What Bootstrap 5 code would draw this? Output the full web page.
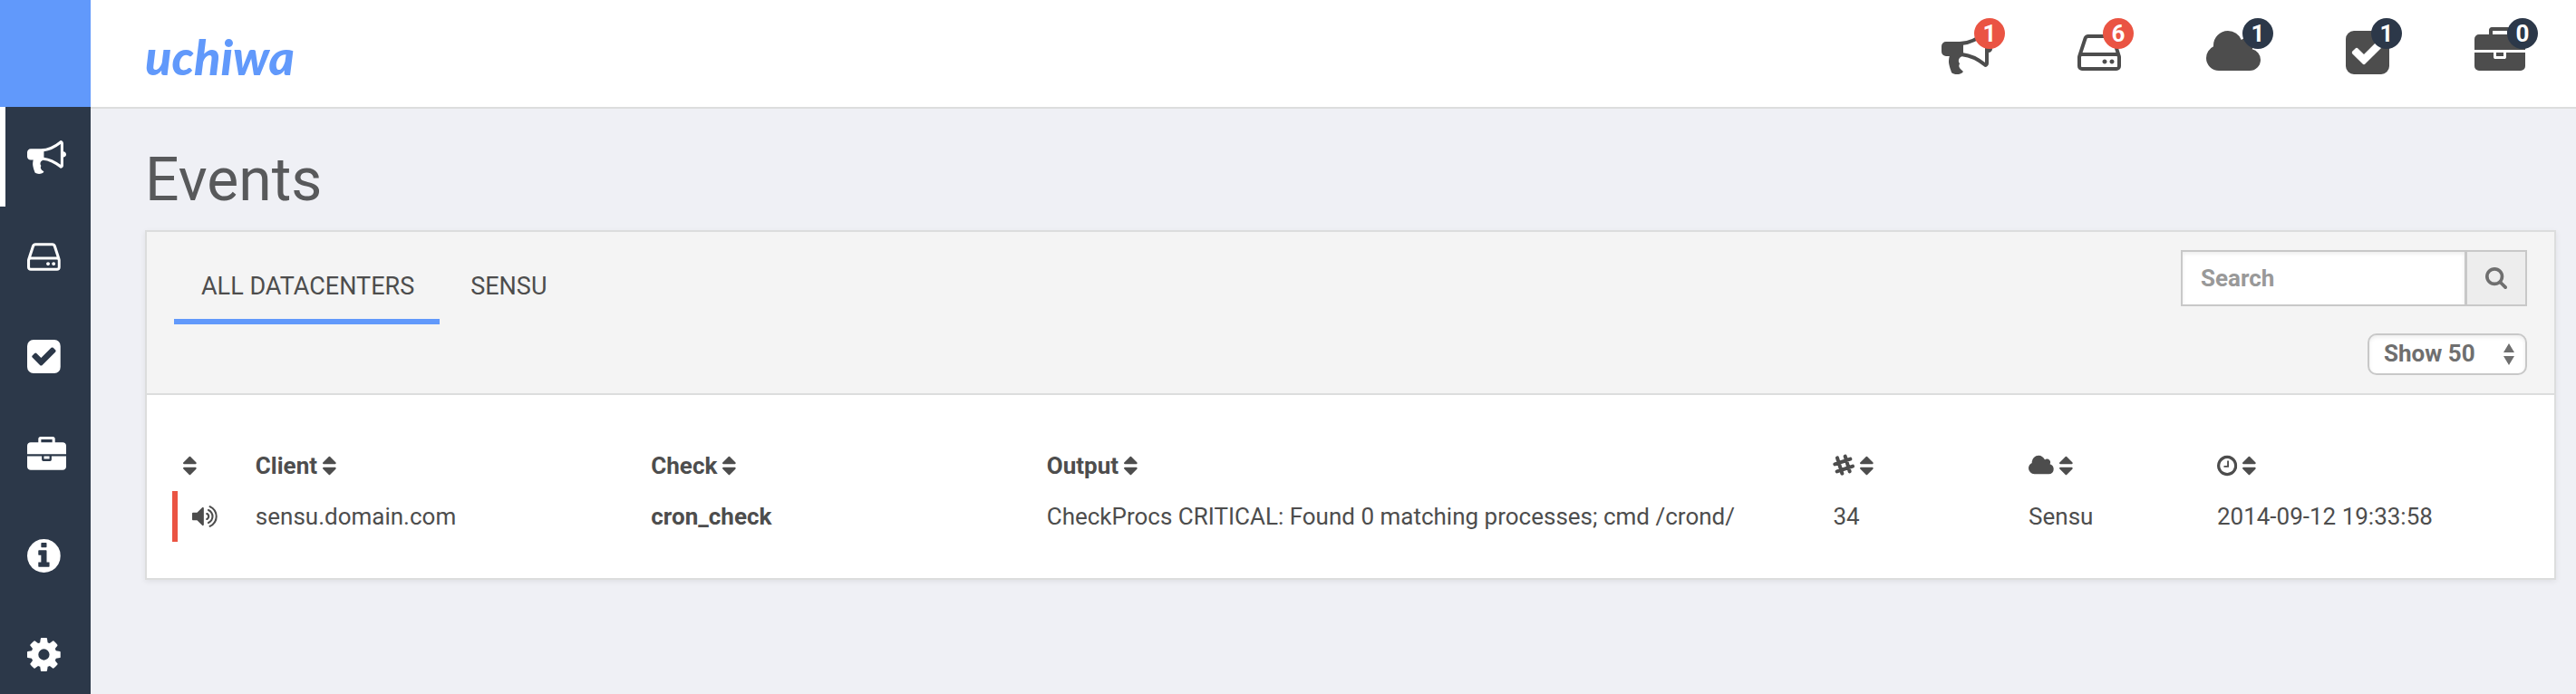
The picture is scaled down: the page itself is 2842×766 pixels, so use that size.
<!DOCTYPE html>
<html lang="en">
<head>
<meta charset="utf-8">
<meta name="viewport" content="width=device-width, initial-scale=1">
<title>Uchiwa - Events</title>
<link rel="stylesheet" href="https://cdn.jsdelivr.net/npm/bootstrap@5.3.0/dist/css/bootstrap.min.css">
<style>
  :root { --ink: #4d4d4d; --accent: #6199fb; --navy: #2c3849; --alert: #ea5443; --line: #dcdddd; }
  body { background: #eff0f5; color: var(--ink); font-family: Roboto, "Liberation Sans", sans-serif; font-size: 26px; line-height: 36px; }
  .glyph { fill: currentColor; height: 56px; width: auto; display: block; flex: none; overflow: visible; }

  .side-nav { width: 100px; background: var(--navy); }
  .side-top { height: 118px; background: var(--accent); }
  .side-link { height: 110px; padding-left: 30px; color: #fff; }
  .side-link:last-child { height: 108px; }
  .side-link.active { box-shadow: inset 6px 0 #fff; }
  .side-link .glyph { height: 43px; }

  .top-bar { height: 120px; padding: 0 56px 2px 60px; background: #fff; border-bottom: 2px solid var(--line); }
  .brand { font: italic 900 54px/64px Lato, sans-serif; color: var(--accent); padding-top: 10px; }
  .counters { gap: 94px; }
  .counter { color: var(--ink); }
  .counter-badge { position: absolute; top: -10px; right: -14px; width: 34px; height: 34px; border-radius: 50%; background: var(--navy); color: #fff; font-weight: 700; font-size: 26px; line-height: 34px; text-align: center; }
  .counter-badge.is-alert { background: var(--alert); }

  .content { padding: 40px 22px 40px 60px; }
  .page-title { font-size: 66px; line-height: 78px; font-weight: 400; color: #58595b; margin: 0 0 16px; }
  .panel { background: #fff; border: 2px solid var(--line); box-shadow: 0 2px 6px rgba(0,0,0,.07); }
  .panel-top { background: #f4f4f4; border-bottom: 2px solid var(--line); padding: 20px 30px; }
  .dc-tabs { gap: 4px; padding-top: 20px; }
  .dc-tab { display: block; color: var(--ink); text-decoration: none; text-transform: uppercase; font-size: 27px; padding: 2px 28px 18px 30px; border-bottom: 6px solid transparent; }
  .dc-tab.active { border-color: var(--accent); }
  .tools { gap: 30px; }
  .search-box { width: 382px; height: 62px; }
  .search-box .form-control, .search-box .btn { border: 2px solid #c8c8c8; border-radius: 0; font-size: 26px; }
  .search-box .form-control { padding: 0 20px; font-weight: 700; line-height: 36px; box-shadow: inset 0 2px 4px rgba(0,0,0,.08); }
  .search-box .form-control::placeholder { color: #999; opacity: 1; }
  .search-box .btn { width: 68px; padding: 0; background: #ededed; color: #6f6f6f; }
  .search-box .glyph { height: 24px; margin: auto; }
  .show-select { width: 176px; height: 46px; border: 2px solid #c8c8c8; border-radius: 10px; padding: 0 16px 2px; font-size: 26px; line-height: 36px; font-weight: 700; color: #6f6f6f; box-shadow: inset 0 2px 4px rgba(0,0,0,.08);
    background: #fff url("data:image/svg+xml,%3Csvg xmlns='http://www.w3.org/2000/svg' viewBox='0 0 12 24'%3E%3Cpath fill='%236f6f6f' d='M6 0l6 10H0zM6 24l6-10H0z'/%3E%3C/svg%3E") no-repeat right 12px center / 12px 24px; }

  .panel-body { padding: 50px 30px 40px 28px; }
  .events { table-layout: fixed; width: 100%; }
  .events th, .events td { height: 56px; padding: 0 10px; white-space: nowrap; vertical-align: middle; }
  .events th { font-weight: 700; }
  .events th:first-child { padding-left: 12px; }
  .events td:first-child { padding-left: 22px; box-shadow: inset 6px 0 var(--alert); }
  .events .glyph { height: 26px; }
  .events .glyph.sound { height: 30px; }
  .sort-btn { border: 0; background: none; padding: 0; font: inherit; color: inherit; display: flex; align-items: center; gap: 6px; }
  .c-state { width: 3.15%; } .c-name { width: 16.8%; } .c-out { width: 33.4%; } .c-count { width: 8.3%; } .c-dc { width: 8%; }
</style>
</head>
<body>
<svg class="d-none" aria-hidden="true">
  <symbol id="bullhorn" viewBox="0 0 1792 1792"><path d="M1664 640q53 0 90.500 37.500t37.500 90.500-37.500 90.500-90.500 37.500v384q0 52-38 90t-90 38q-417-347-812-380-58 19-91 66t-31 100.500 40 92.500q-20 33-23 65.500t6 58 33.500 55 48 50 61.500 50.500q-29 58-111.500 83t-168.500 11.500-132-55.500q-7-23-29.500-87.500t-32-94.500-23-89-15-101 3.500-98.500 22-110.500h-122q-66 0-113-47t-47-113v-192q0-66 47-113t113-47h480q435 0 896-384 52 0 90 38t38 90v384zm-128 604v-954q-394 302-768 343v270q377 42 768 341z"/></symbol>
  <symbol id="hdd" viewBox="128 0 1536 1792"><path d="M1168 1216q0 33-23.500 56.500t-56.500 23.500-56.500-23.500-23.500-56.500 23.500-56.500 56.500-23.500 56.500 23.500 23.500 56.500zm256 0q0 33-23.500 56.500t-56.500 23.500-56.500-23.500-23.500-56.500 23.500-56.500 56.500-23.500 56.500 23.500 23.500 56.500zm112 160v-320q0-13-9.500-22.500t-22.500-9.500h-1216q-13 0-22.500 9.500t-9.500 22.500v320q0 13 9.500 22.500t22.500 9.500h1216q13 0 22.500-9.500t9.500-22.500zm-1230-480h1180l-157-482q-4-13-16-21.500t-26-8.500h-782q-14 0-26 8.500t-16 21.500zm1358 160v320q0 66-47 113t-113 47h-1216q-66 0-113-47t-47-113v-320q0-25 16-75l197-606q17-53 63-86t101-33h782q55 0 101 33t63 86l197 606q16 50 16 75z"/></symbol>
  <symbol id="check" viewBox="128 0 1536 1792"><path d="M813 1299l614-614q19-19 19-45t-19-45l-102-102q-19-19-45-19t-45 19l-467 467-211-211q-19-19-45-19t-45 19l-102 102q-19 19-19 45t19 45l358 358q19 19 45 19t45-19zm851-883v960q0 119-84.500 203.500t-203.500 84.500h-960q-119 0-203.500-84.500t-84.500-203.500v-960q0-119 84.500-203.500t203.500-84.500h960q119 0 203.500 84.500t84.500 203.500z"/></symbol>
  <symbol id="briefcase" viewBox="0 0 1792 1792"><path d="M640 256h512v-128h-512v128zm1152 640v480q0 66-47 113t-113 47h-1472q-66 0-113-47t-47-113v-480h672v160q0 26 19 45t45 19h320q26 0 45-19t19-45v-160h672zm-768 0v128h-256v-128h256zm768-480v384h-1792v-384q0-66 47-113t113-47h352v-160q0-40 28-68t68-28h576q40 0 68 28t28 68v160h352q66 0 113 47t47 113z"/></symbol>
  <symbol id="info" viewBox="128 0 1536 1792"><path d="M1152 1376v-160q0-14-9-23t-23-9h-96v-512q0-14-9-23t-23-9h-320q-14 0-23 9t-9 23v160q0 14 9 23t23 9h96v320h-96q-14 0-23 9t-9 23v160q0 14 9 23t23 9h448q14 0 23-9t9-23zm-128-896v-160q0-14-9-23t-23-9h-192q-14 0-23 9t-9 23v160q0 14 9 23t23 9h192q14 0 23-9t9-23zm640 416q0 209-103 385.500t-279.500 279.500-385.500 103-385.500-103-279.500-279.500-103-385.500 103-385.500 279.500-279.500 385.500-103 385.500 103 279.500 279.500 103 385.500z"/></symbol>
  <symbol id="cog" viewBox="128 0 1536 1792"><path d="M1152 896q0-106-75-181t-181-75-181 75-75 181 75 181 181 75 181-75 75-181zm512-109v222q0 12-8 23t-20 13l-185 28q-19 54-39 91 35 50 107 138 10 12 10 25t-9 23q-27 37-99 108t-94 71q-12 0-26-9l-138-108q-44 23-91 38-16 136-29 186-7 28-36 28h-222q-14 0-24.500-8.500t-11.500-21.500l-28-184q-49-16-90-37l-141 107q-10 9-25 9-14 0-25-11-126-114-165-168-7-10-7-23 0-12 8-23 15-21 51-66.500t54-70.500q-27-50-41-99l-183-27q-13-2-21-12.500t-8-23.500v-222q0-12 8-23t19-13l186-28q14-46 39-92-40-57-107-138-10-12-10-24 0-10 9-23 26-36 98.500-107.500t94.500-71.500q13 0 26 10l138 107q44-23 91-38 16-136 29-186 7-28 36-28h222q14 0 24.500 8.500t11.500 21.500l28 184q49 16 90 37l142-107q9-9 24-9 13 0 25 10 129 119 165 170 7 8 7 22 0 12-8 23-15 21-51 66.500t-54 70.500q26 50 41 98l183 28q13 2 21 12.500t8 23.500z"/></symbol>
  <symbol id="cloud" viewBox="64 0 1920 1792"><path d="M1984 1152q0 159-112.500 271.500t-271.500 112.500h-1088q-185 0-316.500-131.500t-131.500-316.500q0-132 71-241.500t187-163.500q-2-28-2-43 0-212 150-362t362-150q158 0 286.500 88t187.500 230q70-62 166-62 106 0 181 75t75 181q0 75-41 138 129 30 213 134.500t84 239.500z"/></symbol>
  <symbol id="sort" viewBox="384 0 1024 1792"><path d="M1408 1088q0 26-19 45l-448 448q-19 19-45 19t-45-19l-448-448q-19-19-19-45t19-45 45-19h896q26 0 45 19t19 45zm0-384q0 26-19 45t-45 19h-896q-26 0-45-19t-19-45 19-45l448-448q19-19 45-19t45 19l448 448q19 19 19 45z"/></symbol>
  <symbol id="search" viewBox="64 128 1664 1664"><path d="M1216 832q0-185-131.500-316.500t-316.500-131.500-316.500 131.500-131.500 316.500 131.500 316.500 316.500 131.500 316.500-131.500 131.500-316.500zm512 832q0 52-38 90t-90 38q-54 0-90-38l-343-342q-179 124-399 124-143 0-273.500-55.500t-225-150-150-225-55.500-273.500 55.500-273.500 150-225 225-150 273.500-55.500 273.500 55.500 225 150 150 225 55.500 273.500q0 220-124 399l343 343q37 37 37 90z"/></symbol>
  <symbol id="sound" viewBox="64 0 1664 1792"><path d="M832 352v1088q0 26-19 45t-45 19-45-19l-333-333h-262q-26 0-45-19t-19-45v-384q0-26 19-45t45-19h262l333-333q19-19 45-19t45 19 19 45zm384 544q0 76-42.500 141.500t-112.500 93.500q-10 5-25 5-26 0-45-18.500t-19-45.500q0-21 12-35.500t29-25 34-23 29-36 12-56.500-12-56.500-29-36-34-23-29-25-12-35.500q0-27 19-45.500t45-18.500q15 0 25 5 70 27 112.500 93t42.500 142zm256 0q0 153-85 282.500t-225 188.500q-13 5-25 5-27 0-46-19t-19-45q0-39 39-59 56-29 76-44 74-54 115.500-135.500t41.500-173.500-41.500-173.500-115.500-135.500q-20-15-76-44-39-20-39-59 0-26 19-45t45-19q13 0 26 5 140 59 225 188.500t85 282.500zm256 0q0 230-127 422.500t-338 283.500q-13 5-26 5-26 0-45-19t-19-45q0-36 39-59 7-4 22.500-10.500t22.500-10.500q46-25 82-51 123-91 192-227t69-289-69-289-192-227q-36-26-82-51-7-4-22.500-10.500t-22.500-10.500q-39-23-39-59 0-26 19-45t45-19q13 0 26 5 211 91 338 283.500t127 422.500z"/></symbol>
  <symbol id="clock" viewBox="128 0 1536 1792"><path d="M1024 544v448q0 14-9 23t-23 9h-320q-14 0-23-9t-9-23v-64q0-14 9-23t23-9h224v-352q0-14 9-23t23-9h64q14 0 23 9t9 23zm416 352q0-148-73-273t-198-198-273-73-273 73-198 198-73 273 73 273 198 198 273 73 273-73 198-198 73-273zm224 0q0 209-103 385.500t-279.500 279.500-385.500 103-385.500-103-279.500-279.500-103-385.500 103-385.500 279.500-279.500 385.500-103 385.500 103 279.500 279.500 103 385.500z"/></symbol>
  <symbol id="hash" viewBox="0 0 72 78"><path fill="none" stroke="currentColor" stroke-width="12" stroke-linecap="round" d="M15 13l16 52M41 8l15 50M7 34l51-17M14 58l52-17"/></symbol>
</svg>

<div class="d-flex min-vh-100">
  <nav class="side-nav flex-shrink-0" aria-label="Main">
    <div class="side-top"></div>
    <a class="side-link d-flex align-items-center active" href="#events" aria-label="Events"><svg class="glyph" viewBox="0 0 1792 1792"><use href="#bullhorn"/></svg></a>
    <a class="side-link d-flex align-items-center" href="#clients" aria-label="Clients"><svg class="glyph" viewBox="0 0 1536 1792"><use href="#hdd"/></svg></a>
    <a class="side-link d-flex align-items-center" href="#checks" aria-label="Checks"><svg class="glyph" viewBox="0 0 1536 1792"><use href="#check"/></svg></a>
    <a class="side-link d-flex align-items-center" href="#stashes" aria-label="Stashes"><svg class="glyph" viewBox="0 0 1792 1792"><use href="#briefcase"/></svg></a>
    <a class="side-link d-flex align-items-center" href="#info" aria-label="Info"><svg class="glyph" viewBox="0 0 1536 1792"><use href="#info"/></svg></a>
    <a class="side-link d-flex align-items-center" href="#settings" aria-label="Settings"><svg class="glyph" viewBox="0 0 1536 1792"><use href="#cog"/></svg></a>
  </nav>

  <div class="flex-grow-1">
    <header class="top-bar d-flex align-items-center justify-content-between">
      <a class="brand text-decoration-none" href="#home">uchiwa</a>
      <div class="counters d-flex">
        <a class="counter position-relative text-decoration-none" href="#events" aria-label="Events"><svg class="glyph" viewBox="0 0 1792 1792"><use href="#bullhorn"/></svg><span class="counter-badge is-alert">1</span></a>
        <a class="counter position-relative text-decoration-none" href="#clients" aria-label="Clients"><svg class="glyph" viewBox="0 0 1536 1792"><use href="#hdd"/></svg><span class="counter-badge is-alert">6</span></a>
        <a class="counter position-relative text-decoration-none" href="#datacenters" aria-label="Datacenters"><svg class="glyph" viewBox="0 0 1920 1792"><use href="#cloud"/></svg><span class="counter-badge">1</span></a>
        <a class="counter position-relative text-decoration-none" href="#checks" aria-label="Checks"><svg class="glyph" viewBox="0 0 1536 1792"><use href="#check"/></svg><span class="counter-badge">1</span></a>
        <a class="counter position-relative text-decoration-none" href="#stashes" aria-label="Stashes"><svg class="glyph" viewBox="0 0 1792 1792"><use href="#briefcase"/></svg><span class="counter-badge">0</span></a>
      </div>
    </header>

    <main class="content">
      <h1 class="page-title">Events</h1>
      <section class="panel">
        <div class="panel-top d-flex justify-content-between align-items-start">
          <div class="dc-tabs d-flex">
            <a class="dc-tab active" href="#all">All Datacenters</a>
            <a class="dc-tab" href="#sensu">Sensu</a>
          </div>
          <form class="tools d-flex flex-column align-items-end">
            <div class="search-box input-group flex-nowrap">
              <input class="form-control" type="text" placeholder="Search" aria-label="Search">
              <button class="btn" type="button" aria-label="Run search"><svg class="glyph" viewBox="0 0 1664 1664"><use href="#search"/></svg></button>
            </div>
            <select class="show-select form-select" aria-label="Rows to show"><option>Show 50</option></select>
          </form>
        </div>
        <div class="panel-body">
          <table class="events">
            <colgroup><col class="c-state"><col class="c-name"><col class="c-name"><col class="c-out"><col class="c-count"><col class="c-dc"><col></colgroup>
            <thead>
              <tr>
                <th><button class="sort-btn" type="button" aria-label="Sort by state"><svg class="glyph" viewBox="0 0 1024 1792"><use href="#sort"/></svg></button></th>
                <th><button class="sort-btn" type="button">Client<svg class="glyph" viewBox="0 0 1024 1792"><use href="#sort"/></svg></button></th>
                <th><button class="sort-btn" type="button">Check<svg class="glyph" viewBox="0 0 1024 1792"><use href="#sort"/></svg></button></th>
                <th><button class="sort-btn" type="button">Output<svg class="glyph" viewBox="0 0 1024 1792"><use href="#sort"/></svg></button></th>
                <th><button class="sort-btn" type="button" aria-label="Sort by occurrences"><svg class="glyph" viewBox="0 0 72 78"><use href="#hash"/></svg><svg class="glyph" viewBox="0 0 1024 1792"><use href="#sort"/></svg></button></th>
                <th><button class="sort-btn" type="button" aria-label="Sort by datacenter"><svg class="glyph" viewBox="0 0 1920 1792"><use href="#cloud"/></svg><svg class="glyph" viewBox="0 0 1024 1792"><use href="#sort"/></svg></button></th>
                <th><button class="sort-btn" type="button" aria-label="Sort by time"><svg class="glyph" viewBox="0 0 1536 1792"><use href="#clock"/></svg><svg class="glyph" viewBox="0 0 1024 1792"><use href="#sort"/></svg></button></th>
              </tr>
            </thead>
            <tbody>
              <tr>
                <td><svg class="glyph sound" viewBox="0 0 1664 1792"><use href="#sound"/></svg></td>
                <td>sensu.domain.com</td>
                <td class="fw-bold">cron_check</td>
                <td>CheckProcs CRITICAL: Found 0 matching processes; cmd /crond/</td>
                <td>34</td>
                <td>Sensu</td>
                <td>2014-09-12 19:33:58</td>
              </tr>
            </tbody>
          </table>
        </div>
      </section>
    </main>
  </div>
</div>
<script src="https://cdn.jsdelivr.net/npm/bootstrap@5.3.0/dist/js/bootstrap.bundle.min.js"></script>
</body>
</html>
